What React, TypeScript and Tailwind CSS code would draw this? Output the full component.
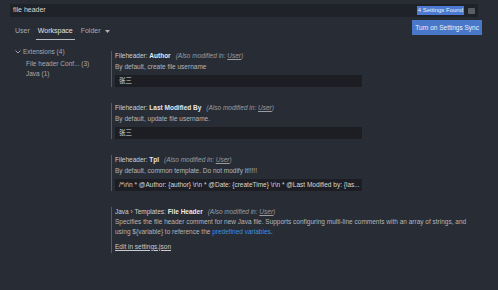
import React from "react";

const font = { fontFamily: '"Liberation Sans", "Noto Sans CJK SC", sans-serif' };

function Modified() {
  return (
    <span className="italic text-[#9a9ca0] ml-[5px] font-normal">
      (Also modified in: <span className="underline">User</span>)
    </span>
  );
}

function Setting({
  prefix,
  name,
  desc,
  value,
}: {
  prefix: string;
  name: string;
  desc: string;
  value: string;
}) {
  return (
    <div className="flex">
      <div className="w-[1px] bg-[#3b6676] mr-[3px]" />
      <div className="flex flex-col">
        <div className="h-[10px] leading-[10px] text-[#d0d0d0] whitespace-nowrap">
          {prefix}
          <span className="font-bold text-[#e8e8e8]">{name}</span>
          <Modified />
        </div>
        <div className="h-[10px] leading-[10px] mt-[1px] text-[#b4b6ba] whitespace-nowrap">{desc}</div>
        <div className="mt-[3px] w-[247px] h-[12px] bg-[#1c1e23] text-[#d8d8d8] leading-[12px] px-[4px] whitespace-nowrap overflow-hidden">
          {value}
        </div>
      </div>
    </div>
  );
}

export default function App() {
  return (
    <div className="w-[498px] h-[290px] bg-[#282c34] text-[6.5px] overflow-hidden" style={font}>
      {/* search bar */}
      <div className="pt-[4px] pl-[10px]">
        <div className="w-[468px] h-[13px] bg-[#1f2228] flex items-center pl-[3px] pr-[3px]">
          <span className="text-[#d6d6d6] text-[7px]">file header</span>
          <div className="flex-1" />
          <span className="bg-[#4c7ad0] text-[#e8eefc] px-[1px] h-[9px] leading-[9px] text-[6px]">4 Settings Found</span>
          <div className="ml-[4px] w-[7px] h-[6px] bg-[#5a5e66] rounded-[1px]" />
        </div>
      </div>
      {/* tabs row */}
      <div className="flex items-start pl-[15px] pr-[16px] mt-[3px]">
        <div className="flex items-center text-[7px] text-[#a8aab0] mt-[3px] gap-[6px]">
          <span>User</span>
          <span className="text-[#e2e2e2] border-b border-[#b8bcc4] pb-[2px] px-[2px] mt-[3px]">Workspace</span>
          <span className="flex items-center gap-[4px]">
            Folder
            <svg width="5" height="3" viewBox="0 0 5 3">
              <path d="M0 0 L5 0 L2.5 3 Z" fill="#b0b2b8" />
            </svg>
          </span>
        </div>
        <div className="flex-1" />
        <div className="bg-[#4a78c8] text-[#eef2fb] text-[6.5px] h-[15px] leading-[15px] px-[3px]">Turn on Settings Sync</div>
      </div>
      {/* body */}
      <div className="flex mt-[7px]">
        <div className="w-[111px] shrink-0 pl-[15px] text-[#a8aab0] flex flex-col">
          <div className="flex items-center h-[10px]">
            <svg width="6" height="4" viewBox="0 0 6 4" className="mr-[2px]">
              <path d="M0.5 0.5 L3 3 L5.5 0.5" stroke="#a8aab0" strokeWidth="0.9" fill="none" />
            </svg>
            Extensions (4)
          </div>
          <div className="pl-[11px] h-[10px] leading-[10px] mt-[2px]">File header Conf... (3)</div>
          <div className="pl-[11px] h-[10px] leading-[10px]">Java (1)</div>
        </div>
        <div className="flex flex-col gap-[16px] pt-[4px]">
          <Setting prefix="Fileheader: " name="Author" desc="By default, create file username" value="张三" />
          <Setting prefix="Fileheader: " name="Last Modified By" desc="By default, update file username." value="张三" />
          <Setting
            prefix="Fileheader: "
            name="Tpl"
            desc="By default, common template. Do not modify it!!!!!"
            value={'/*\\r\\n * @Author: {author} \\r\\n * @Date: {createTime} \\r\\n * @Last Modified by: {las...'}
          />
          <div className="flex">
            <div className="w-[1px] bg-[#3b6676] mr-[3px]" />
            <div className="flex flex-col pb-[1px]">
              <div className="h-[10px] leading-[10px] text-[#d0d0d0] whitespace-nowrap">
                Java › Templates: <span className="font-bold text-[#e8e8e8]">File Header</span>
                <Modified />
              </div>
              <div className="h-[10px] leading-[10px] text-[#b4b6ba] whitespace-nowrap">
                Specifies the file header comment for new Java file. Supports configuring multi-line comments with an array of strings, and
              </div>
              <div className="h-[9px] leading-[9px] text-[#b4b6ba] whitespace-nowrap">
                {"using ${variable} to reference the "}
                <span className="text-[#3c8fe8]">predefined variables</span>.
              </div>
              <div className="mt-[6px] text-[#c8cacf] underline h-[10px] leading-[10px]">Edit in settings.json</div>
            </div>
          </div>
        </div>
      </div>
    </div>
  );
}
